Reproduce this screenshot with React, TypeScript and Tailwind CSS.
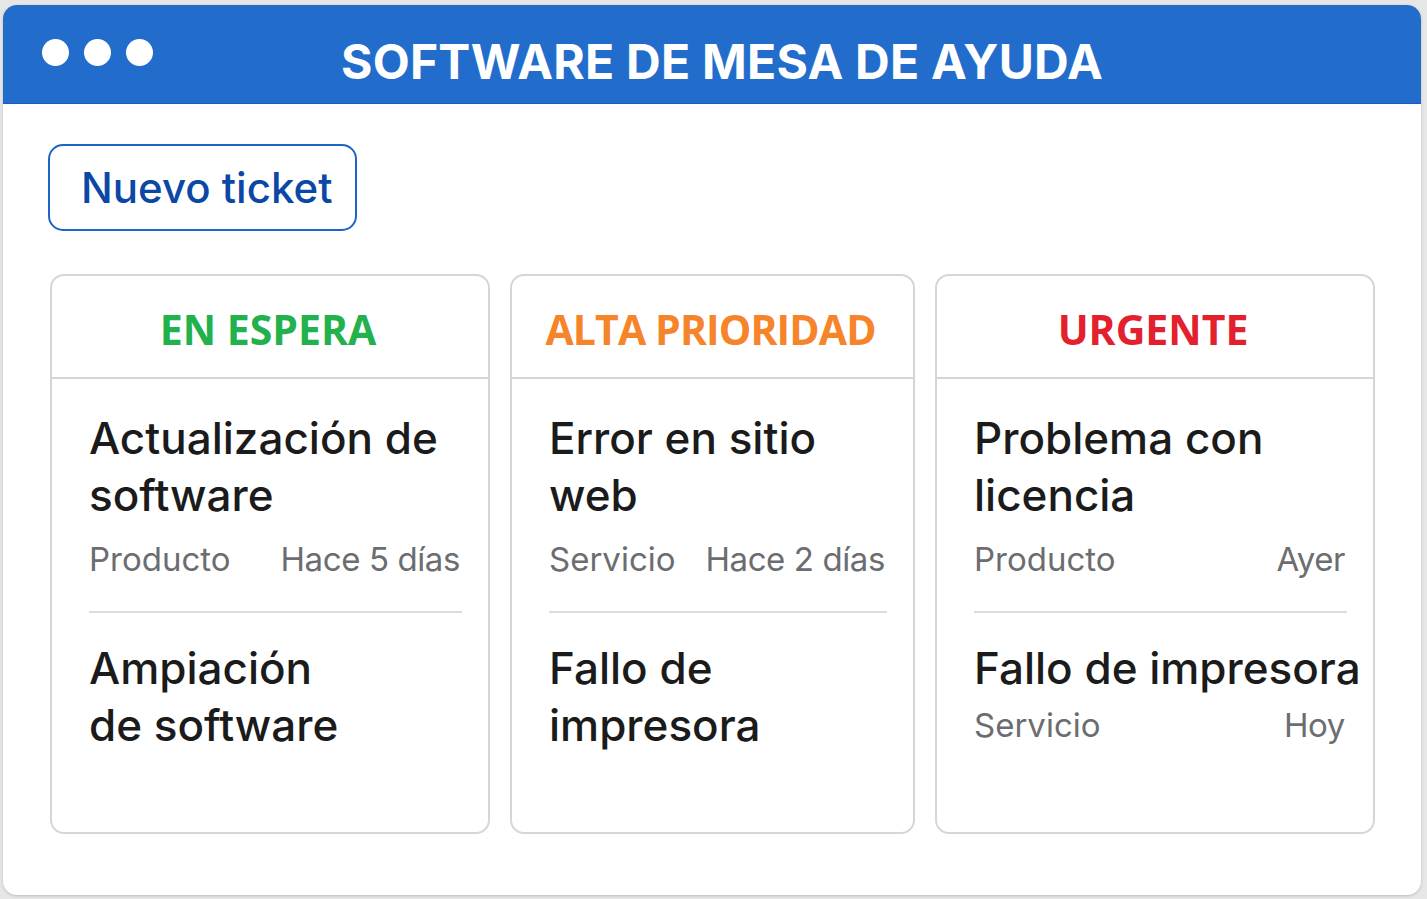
import React from "react";

type Item = {
  lines: string[];
  meta?: [string, string];
  pt: string;
  metaMt?: string;
};

type Col = {
  title: string;
  color: string;
  width: string;
  track: string;
  items: Item[];
};

const cols: Col[] = [
  {
    title: "EN ESPERA",
    color: "text-[#22b14c]",
    width: "w-[440px]",
    track: "tracking-[0px]",
    items: [
      { lines: ["Actualización de", "software"], meta: ["Producto", "Hace 5 días"], pt: "pt-[31px]", metaMt: "mt-[13px]" },
      { lines: ["Ampiación", "de software"], pt: "pt-[27px]" },
    ],
  },
  {
    title: "ALTA PRIORIDAD",
    color: "text-[#f5842b]",
    width: "w-[405px]",
    track: "tracking-[-0.9px]",
    items: [
      { lines: ["Error en sitio", "web"], meta: ["Servicio", "Hace 2 días"], pt: "pt-[31px]", metaMt: "mt-[13px]" },
      { lines: ["Fallo de", "impresora"], pt: "pt-[27px]" },
    ],
  },
  {
    title: "URGENTE",
    color: "text-[#e2202e]",
    width: "w-[440px]",
    track: "tracking-[0px]",
    items: [
      { lines: ["Problema con", "licencia"], meta: ["Producto", "Ayer"], pt: "pt-[31px]", metaMt: "mt-[13px]" },
      { lines: ["Fallo de impresora"], meta: ["Servicio", "Hoy"], pt: "pt-[27px]", metaMt: "mt-[6px]" },
    ],
  },
];

function Ticket({ item, last }: { item: Item; last: boolean }) {
  return (
    <div className={item.pt}>
      <div className="text-[44px] leading-[57px] font-medium text-[#1b1b1b] whitespace-nowrap">
        {item.lines.map((l, i) => (
          <div key={i}>{l}</div>
        ))}
      </div>
      {item.meta && (
        <div className={`${item.metaMt} flex justify-between text-[33px] leading-[44px] text-[#6b6d70] whitespace-nowrap pr-[2px]`}>
          <span>{item.meta[0]}</span>
          <span className="tracking-[-0.4px]">{item.meta[1]}</span>
        </div>
      )}
      {!last && <div className="mt-[30px] h-[2px] bg-[#dcdcdc]" />}
    </div>
  );
}

export default function App() {
  return (
    <div className="w-[1427px] h-[899px] bg-[#e6e6e6] pt-[5px] pl-[3px]" style={{ fontFamily: "Inter, 'Noto Sans', sans-serif" }}>
      <div className="w-[1418px] h-[890px] bg-white rounded-[14px] overflow-hidden shadow-[0_1px_3px_rgba(0,0,0,0.18)] flex flex-col">
        <div className="h-[99px] bg-[#226dcc] border-b border-[#1c5cb4] flex items-center pl-[39px] shrink-0">
          <div className="flex gap-[15px] -mt-[3px]">
            <span className="w-[27px] h-[27px] rounded-full bg-white" />
            <span className="w-[27px] h-[27px] rounded-full bg-white" />
            <span className="w-[27px] h-[27px] rounded-full bg-white" />
          </div>
          <div className="ml-[188px] mt-[16px] text-white font-bold text-[48px] leading-[60px] tracking-[0.25px]">
            SOFTWARE DE MESA DE AYUDA
          </div>
        </div>
        <div className="pl-[45px] pt-[40px]">
          <button className="w-[309px] h-[87px] border-[2.5px] border-[#1f63c5] rounded-[15px] text-[42px] font-medium text-[#0b48a6] flex items-center pl-[31px]">
            Nuevo ticket
          </button>
          <div className="mt-[43px] ml-[2px] flex gap-[20px]">
            {cols.map((c) => (
              <div key={c.title} className={`${c.width} h-[560px] border-2 border-[#d6d6d6] rounded-[14px] flex flex-col`}>
                <div
                  className={`h-[103px] border-b-2 border-[#d6d6d6] flex items-center justify-center pt-[6px] pr-[4px] text-[41px] font-bold ${c.color} ${c.track}`}
                  style={{ fontFamily: "'Open Sans', sans-serif" }}
                >
                  {c.title}
                </div>
                <div className="pl-[37px] pr-[26px]">
                  {c.items.map((it, i) => (
                    <Ticket key={i} item={it} last={i === c.items.length - 1} />
                  ))}
                </div>
              </div>
            ))}
          </div>
        </div>
      </div>
    </div>
  );
}
